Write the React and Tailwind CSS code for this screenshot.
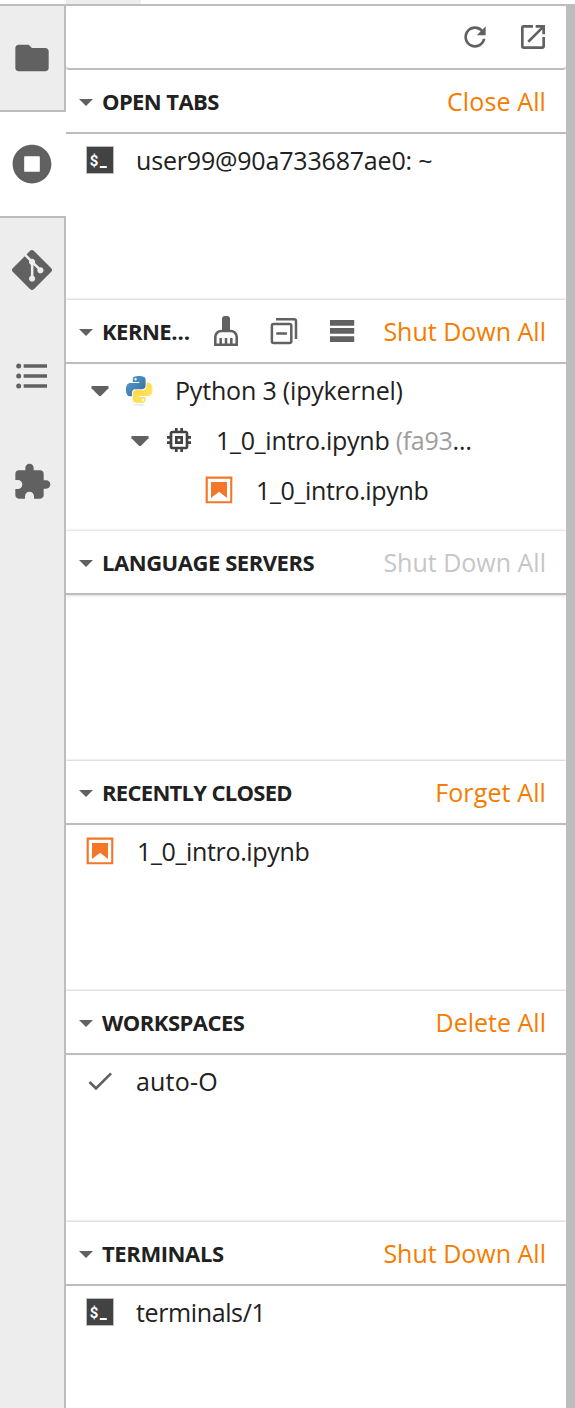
import React from 'react';
import { SiGit } from 'react-icons/si';

const Icon = ({ box = 24, className, children }) => (
  <svg viewBox={`0 0 ${box} ${box}`} className={`shrink-0 ${className}`} fill="currentColor">{children}</svg>
);

const Folder = () => (
  <Icon className="mt-0.5 size-10"><path d="M10 4H4c-1.1 0-1.99.9-1.99 2L2 18c0 1.1.9 2 2 2h16c1.1 0 2-.9 2-2V8c0-1.1-.9-2-2-2h-8l-2-2z" /></Icon>
);
const Running = () => (
  <Icon box={512} className="mt-0.5 size-10"><path d="M256 8C119 8 8 119 8 256s111 248 248 248 248-111 248-248S393 8 256 8zm100 336c0 6-6 12-12 12H168c-6 0-12-6-12-12V168c0-6 6-12 12-12h176c6 0 12 6 12 12v176z" /></Icon>
);
const Toc = () => (
  <Icon className="size-10">
    <path d="M7 5h14v2H7V5m0 8v-2h14v2H7m0 6v-2h14v2H7" />
    <circle cx="4" cy="6" r="1.5" /><circle cx="4" cy="12" r="1.5" /><circle cx="4" cy="18" r="1.5" />
  </Icon>
);
const Extension = () => (
  <Icon className="size-10"><path d="M20.5 11H19V7c0-1.1-.9-2-2-2h-4V3.5C13 2.12 11.88 1 10.5 1S8 2.12 8 3.5V5H4c-1.1 0-1.99.9-1.99 2v3.8H3.5c1.49 0 2.7 1.21 2.7 2.7s-1.21 2.7-2.7 2.7H2V20c0 1.1.9 2 2 2h3.8v-1.5c0-1.49 1.21-2.7 2.7-2.7 1.49 0 2.7 1.21 2.7 2.7V22H17c1.1 0 2-.9 2-2v-4h1.5c1.38 0 2.5-1.12 2.5-2.5S21.88 11 20.5 11z" /></Icon>
);
const Refresh = () => (
  <Icon box={18} className="size-8"><path d="M9 13.5c-2.49 0-4.5-2.01-4.5-4.5S6.51 4.5 9 4.5c1.24 0 2.36.52 3.17 1.33L10 8h5V3l-1.76 1.76C12.15 3.68 10.66 3 9 3 5.69 3 3.01 5.69 3.01 9S5.69 15 9 15c2.97 0 5.43-2.16 5.9-5h-1.52c-.46 2-2.24 3.5-4.38 3.5z" /></Icon>
);
const Launch = () => (
  <Icon className="size-8"><path d="M19 19H5V5h7V3H5a2 2 0 0 0-2 2v14a2 2 0 0 0 2 2h14c1.1 0 2-.9 2-2v-7h-2v7zM14 3v2h3.59l-9.83 9.83 1.41 1.41L19 6.41V10h2V3h-7z" /></Icon>
);
const Broom = () => (
  <Icon box={32} className="size-8">
    <path d="M12 16V4a3 3 0 0 1 3-3h2a3 3 0 0 1 3 3v12z" />
    <path d="M5.3 29.7V22a6 6 0 0 1 6-6h9.4a6 6 0 0 1 6 6v7.7z" fill="none" stroke="currentColor" strokeWidth="2.6" />
    <path d="M10.700 29v-6M16 29v-6M21.300 29v-6" stroke="currentColor" strokeWidth="2.500" />
  </Icon>
);
const Collapse = () => (
  <Icon box={32} className="size-8">
    <g fill="none" stroke="currentColor" strokeWidth="2.500">
      <rect x="3.9" y="8.9" width="19.4" height="19.2" rx="1.8" />
      <path d="M8 4.2h18a2 2 0 0 1 2 2v17.8M8.3 18.500h10.600" />
    </g>
  </Icon>
);
const List = () => (
  <Icon box={32} className="size-8"><path d="M4 5h24.2v5.7H4zM4 13h24.2v5.7H4zM4 21.3h24.2V27H4z" /></Icon>
);
const Chip = () => (
  <Icon className="size-8 text-[#424242]"><path d="M15 9H9v6h6V9zm-2 4h-2v-2h2v2zm8-2V9h-2V7c0-1.1-.9-2-2-2h-2V3h-2v2h-2V3H9v2H7c-1.1 0-2 .9-2 2v2H3v2h2v2H3v2h2v2c0 1.1.9 2 2 2h2v2h2v-2h2v2h2v-2h2c1.1 0 2-.9 2-2v-2h2v-2h-2v-2h2zm-4 6H7V7h10v10z" /></Icon>
);
const Notebook = () => (
  <Icon box={22} className="size-8 text-[#f37726]">
    <path d="M18.7 3.3v15.4H3.3V3.3h15.4m1.5-1.5H1.8v18.3h18.3l.1-18.3z" />
    <path d="M16.5 16.5l-5.4-4.3-5.6 4.3v-11h11z" />
  </Icon>
);
const Terminal = () => (
  <Icon box={32} className="size-8">
    <rect x="2.5" y="2.5" width="27" height="27" fill="#424242" stroke="#bdbdbd" />
    <text x="5.8" y="22" fill="#fff" className="font-['Roboto'] text-[15px] font-bold">$</text>
    <path d="M15.800 22h7v2h-7z" fill="#fff" />
  </Icon>
);
const Check = () => (
  <Icon className="size-8"><path d="M9 16.17L4.83 12l-1.42 1.41L9 19 21 7l-1.41-1.41z" /></Icon>
);
const Python = () => (
  <svg viewBox="0 0 32 32" className="size-8 shrink-0">
    <defs>
      <linearGradient id="pyBlue" x1="0" y1="0" x2="1" y2="1"><stop stopColor="#5a9fd4" /><stop offset="1" stopColor="#306998" /></linearGradient>
      <linearGradient id="pyYellow" x1="0" y1="0" x2="1" y2="1"><stop stopColor="#ffd43b" /><stop offset="1" stopColor="#ffe873" /></linearGradient>
    </defs>
    <ellipse cx="16" cy="31" rx="6" ry="1" fill="#ececec" />
    <g transform="translate(3 2) scale(1.1 1.13)">
      <path fill="url(#pyBlue)" d="M14.25.18l.9.2.73.26.59.3.45.32.34.34.25.34.16.33.1.3.04.26.02.2-.01.13V8.5l-.05.63-.13.55-.21.46-.26.38-.3.31-.33.25-.35.19-.35.14-.33.1-.3.07-.26.04-.21.02H8.77l-.69.05-.59.14-.5.22-.41.27-.33.32-.27.35-.2.36-.15.37-.1.35-.07.32-.04.27-.02.21v3.06H3.17l-.21-.03-.28-.07-.32-.12-.35-.18-.36-.26-.36-.36-.35-.46-.32-.59-.28-.73-.21-.88-.14-1.05-.05-1.23.06-1.22.16-1.04.24-.87.32-.71.36-.57.4-.44.42-.33.42-.24.4-.16.36-.1.32-.05.24-.01h.16l.06.01h8.16v-.83H6.18l-.01-2.75-.02-.37.05-.34.11-.31.17-.28.25-.26.31-.23.38-.2.44-.18.51-.15.58-.12.64-.1.71-.06.77-.04.84-.02 1.27.05zm-6.3 1.98l-.23.33-.08.41.08.41.23.34.33.22.41.09.41-.09.33-.22.23-.34.08-.41-.08-.41-.23-.33-.33-.22-.41-.09-.41.09z" />
      <path fill="url(#pyYellow)" d="M21.04 6.11l.28.06.32.12.35.18.36.27.36.35.35.47.32.59.28.73.21.88.14 1.04.05 1.23-.06 1.23-.16 1.04-.24.86-.32.71-.36.57-.4.45-.42.33-.42.24-.4.16-.36.09-.32.05-.24.02-.16-.01h-8.22v.82h5.84l.01 2.76.02.36-.05.34-.11.31-.17.29-.25.25-.31.24-.38.2-.44.17-.51.15-.58.13-.64.09-.71.07-.77.04-.84.01-1.27-.04-1.07-.14-.9-.2-.73-.25-.59-.3-.45-.33-.34-.34-.25-.34-.16-.33-.1-.3-.04-.25-.02-.2.01-.13v-5.34l.05-.64.13-.54.21-.46.26-.38.3-.32.33-.24.35-.2.35-.14.33-.1.3-.06.26-.04.21-.02.13-.01h5.84l.69-.05.59-.14.5-.21.41-.28.33-.32.27-.35.2-.36.15-.36.1-.35.07-.32.04-.28.02-.21V6.07h2.09l.14.01zm-6.47 14.25l-.23.33-.08.41.08.41.23.33.33.23.41.08.41-.08.33-.23.23-.33.08-.41-.08-.41-.23-.33-.33-.23-.41-.08-.41.08z" />
    </g>
  </svg>
);
const TreeCaret = () => (
  <svg viewBox="0 0 18 11" className="mt-0.5 h-[11px] w-[18px] shrink-0 fill-[#616161]"><path d="M.5 0h17v2.2L10.3 9.500q-1.300 1-2.600 0L.5 2.2z" /></svg>
);

const SideTab = ({ active, last, children }) => (
  <div className={`flex h-[106px] w-[66px] shrink-0 items-center pl-3 pb-0.5 ${active ? 'border-b-2 border-[#bdbdbd] bg-white' : 'border-r-2 border-[#bdbdbd]'} ${last ? 'border-b-2' : ''}`}>{children}</div>
);

const Section = ({ title, titleClass, action, actionClass, height, first, disabled, tools, children }) => (
  <section className={`flex shrink-0 flex-col ${height}`}>
    <header className={`flex h-16 shrink-0 items-center border-b-2 border-[#bdbdbd] bg-white pl-[13px] pr-5 ${first ? '' : disabled ? 'shadow-[0_0_3px_rgba(0,0,0,0.25)]' : 'shadow-[0_-1px_2px_rgba(0,0,0,0.18)]'}`}>
      <svg viewBox="0 0 14 7" className="mt-0.5 h-[7px] w-[14px] shrink-0 fill-[#616161]"><path d="M0 0h14L7 7z" /></svg>
      <h2 className={`ml-[9px] whitespace-nowrap text-[22px] font-bold leading-8 text-[#212121] ${titleClass}`}>{title}</h2>
      {tools}
      <button className={`ml-auto whitespace-nowrap text-[25px] leading-8 ${disabled ? 'text-[#c6c6c6]' : 'text-[#f57c00]'} ${actionClass}`}>{action}</button>
    </header>
    <div className="flex flex-col pt-0.5">{children}</div>
  </section>
);

const Row = ({ icon, label, pad = 'pl-[18px]', gap = 'ml-5', className }) => (
  <div className={`flex h-[50px] items-center ${pad}`}>
    <div className="flex items-center pb-0.5">{icon}</div>
    <span className={`whitespace-nowrap pb-0.5 text-[25px] leading-8 text-[#212121] ${gap} ${className}`}>{label}</span>
  </div>
);

export default function App() {
  return (
    <div className="flex h-[1408px] w-[575px] flex-col overflow-hidden bg-white font-['Open_Sans','Noto_Sans',sans-serif] text-[#616161]">
      <div className="h-1 shrink-0 pl-[66px]"><div className="h-1 w-[75px] bg-[#ededed]" /></div>
      <div className="flex min-h-0 grow border-t-2 border-[#bdbdbd]">
        <nav className="flex w-[66px] shrink-0 flex-col bg-[#ededed]">
          <SideTab last><Folder /></SideTab>
          <SideTab active><Running /></SideTab>
          <SideTab><SiGit className="size-10" /></SideTab>
          <SideTab><Toc /></SideTab>
          <SideTab><Extension /></SideTab>
          <div className="grow border-r-2 border-[#bdbdbd]" />
        </nav>
        <main className="flex w-[500px] shrink-0 flex-col overflow-hidden">
          <div className="flex h-16 shrink-0 items-center justify-end gap-[26px] rounded-[4px] border-b-2 border-[#bdbdbd] pr-[17px] shadow-[0_1px_3px_rgba(0,0,0,0.2)]">
            <Refresh /><Launch />
          </div>
          <Section first title="OPEN TABS" titleClass="tracking-[-0.6px]" action="Close All" actionClass="tracking-[0.12px]" height="h-[230px]">
            <Row icon={<Terminal />} label="user99@90a733687ae0: ~" className="tracking-[-0.18px]" />
          </Section>
          <Section title="KERNE…" titleClass="tracking-[-0.5px] w-[90px]" action="Shut Down All" actionClass="tracking-[0px]" height="h-[231px]"
            tools={<div className="ml-[18px] flex gap-[26px]"><Broom /><Collapse /><List /></div>}>
            <Row icon={<><TreeCaret /><span className="w-3.5" /><Python /></>} pad="pl-[25px]" gap="ml-5" label="Python 3 (ipykernel)" className="tracking-[-0.18px]" />
            <Row icon={<><TreeCaret /><span className="w-3.5" /><Chip /></>} pad="pl-[65px]" gap="ml-[21px]" label={<>1_0_intro.ipynb <span className="text-[#9e9e9e]">(fa93</span>…</>} className="tracking-[-0.28px]" />
            <Row icon={<Notebook />} pad="pl-[137px]" gap="ml-[21px]" label="1_0_intro.ipynb" className="tracking-[-0.35px]" />
          </Section>
          <Section disabled title="LANGUAGE SERVERS" titleClass="tracking-[-0.45px]" action="Shut Down All" actionClass="tracking-[0px]" height="h-[230px]" />
          <Section title="RECENTLY CLOSED" titleClass="tracking-[-0.7px]" action="Forget All" actionClass="tracking-[0.12px]" height="h-[230px]">
            <Row icon={<Notebook />} gap="ml-[21px]" label="1_0_intro.ipynb" className="tracking-[-0.35px]" />
          </Section>
          <Section title="WORKSPACES" titleClass="tracking-[-0.5px]" action="Delete All" actionClass="tracking-[0px]" height="h-[231px]">
            <Row icon={<Check />} label="auto-O" className="tracking-[0.2px]" />
          </Section>
          <Section title="TERMINALS" titleClass="tracking-[-0.4px]" action="Shut Down All" actionClass="tracking-[0px]" height="h-[186px]">
            <Row icon={<Terminal />} label="terminals/1" className="tracking-[-0.38px]" />
          </Section>
        </main>
        <div className="grow bg-[#bdbdbd]" />
      </div>
    </div>
  );
}
